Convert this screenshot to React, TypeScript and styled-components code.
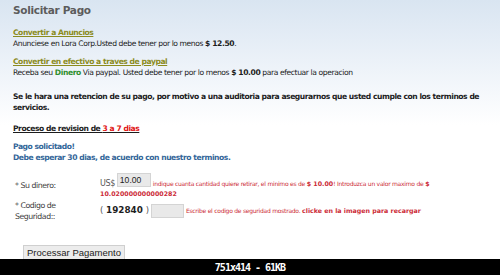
import React from "react";
import styled, { createGlobalStyle } from "styled-components";

const GlobalStyle = createGlobalStyle`
  html, body { margin: 0; padding: 0; background: #ffffff; }
  body { width: 500px; height: 275px; overflow: hidden; }
`;

const Frame = styled.div`
  width: 500px;
  height: 275px;
  display: flex;
  flex-direction: column;
  overflow: hidden;
  font-family: "DejaVu Sans", Verdana, sans-serif;
`;

const Content = styled.main`
  flex: 1;
  min-height: 0;
  overflow: hidden;
  padding: 3px 4px 0 13px;
  background: linear-gradient(180deg, #d9e5f1 0px, #e8eff7 50px, #ffffff 125px);
`;

const Title = styled.h1`
  margin: 0;
  font-size: 10.5px;
  line-height: 14px;
  font-weight: bold;
  color: #5c5c5c;
  letter-spacing: -0.3px;
`;

const Block = styled.section<{ $top: number }>`
  margin-top: ${(p) => p.$top}px;
`;

const Line = styled.p<{ $bold?: boolean; $color?: string }>`
  margin: 0;
  font-size: 7.6px;
  line-height: 11px;
  letter-spacing: ${(p) => (p.$bold ? "-0.45px" : "-0.4px")};
  font-weight: ${(p) => (p.$bold ? "bold" : "normal")};
  color: ${(p) => p.$color || "#1c1c1c"};
`;

const OliveLink = styled.a`
  font-weight: bold;
  color: #8c8c1e;
  text-decoration: underline;
  letter-spacing: -0.45px;
`;

const Strong = styled.b<{ $color?: string }>`
  font-weight: bold;
  color: ${(p) => p.$color || "inherit"};
`;

const Underlined = styled.span`
  text-decoration: underline;
`;

const FormGrid = styled.form`
  margin-top: 10px;
  padding-left: 2px;
  display: grid;
  grid-template-columns: 72px 1fr;
  column-gap: 13px;
  row-gap: 1px;
  align-items: center;
`;

const Label = styled.label`
  font-size: 7.8px;
  line-height: 11.5px;
  letter-spacing: -0.45px;
  color: #3c3c3c;
`;

const Field = styled.div`
  font-size: 6px;
  line-height: 10px;
  letter-spacing: -0.25px;
  color: #cc2b37;
`;

const Currency = styled.span`
  font-size: 8px;
  letter-spacing: -0.4px;
  color: #555555;
`;

const TextInput = styled.input<{ $w: number; $align: string }>`
  box-sizing: border-box;
  width: ${(p) => p.$w}px;
  height: 14px;
  margin: 0 2px;
  padding: 0 2px;
  border: 1px solid #d4d4d4;
  background: #e9e9e9;
  font-family: "Liberation Sans", Arial, sans-serif;
  font-size: 8.6px;
  color: #222222;
  vertical-align: ${(p) => p.$align};
  outline: none;
`;

const HintStrong = styled.b`
  font-size: 6.3px;
  letter-spacing: 0px;
`;

const Paren = styled.span`
  font-size: 8.5px;
  color: #555555;
`;

const Captcha = styled.span`
  display: inline-block;
  margin: 0 3px;
  font-size: 8.8px;
  font-weight: bold;
  letter-spacing: 0px;
  color: #1e1e1e;
  cursor: pointer;
`;

const ButtonRow = styled.div`
  margin-top: 22px;
  padding-left: 10px;
`;

const Button = styled.button`
  box-sizing: border-box;
  display: block;
  width: 102px;
  height: 15px;
  padding: 0;
  border: 1px solid #cfcfcf;
  background: #ececec;
  font-family: "Liberation Sans", Arial, sans-serif;
  font-size: 9.5px;
  line-height: 13px;
  color: #222222;
`;

const InfoBar = styled.footer`
  flex: 0 0 16px;
  height: 16px;
  background: #000000;
  display: flex;
  align-items: center;
  justify-content: center;
  font-family: "DejaVu Sans Mono", "Liberation Mono", monospace;
  font-weight: bold;
  font-size: 10px;
  letter-spacing: -1px;
  color: #ffffff;
`;

export default function App() {
  return (
    <>
      <GlobalStyle />
      <Frame>
        <Content>
          <Title>Solicitar Pago</Title>

          <Block $top={9.5}>
            <Line>
              <OliveLink href="#">Convertir a Anuncios</OliveLink>
            </Line>
            <Line>
              Anunciese en Lora Corp.Usted debe tener por lo menos <Strong>$ 12.50</Strong>.
            </Line>
          </Block>

          <Block $top={7}>
            <Line>
              <OliveLink href="#">Convertir en efectivo a traves de paypal</OliveLink>
            </Line>
            <Line>
              Receba seu <Strong $color="#2e8f2e">Dinero</Strong> Via paypal. Usted debe tener por lo menos{" "}
              <Strong>$ 10.00</Strong> para efectuar la operacion
            </Line>
          </Block>

          <Block $top={13}>
            <Line $bold>
              Se le hara una retencion de su pago, por motivo a una auditoria para asegurarnos que usted cumple con los terminos de servicios.
            </Line>
          </Block>

          <Block $top={10}>
            <Line $bold>
              <Underlined>
                Proceso de revision de <Strong $color="#e01414">3 a 7 dias</Strong>
              </Underlined>
            </Line>
          </Block>

          <Block $top={7}>
            <Line $bold $color="#336699">Pago solicitado!</Line>
            <Line $bold $color="#336699">Debe esperar 30 dias, de acuerdo con nuestro terminos.</Line>
          </Block>

          <FormGrid onSubmit={(e) => e.preventDefault()}>
            <Label htmlFor="dinero">* Su dinero:</Label>
            <Field>
              <Currency>US$</Currency>
              <TextInput id="dinero" $w={34} $align="text-bottom" defaultValue="10.00" />
              indique cuanta cantidad quiere retirar, el minimo es de <HintStrong>$ 10.00</HintStrong>! Introduzca un valor maximo de{" "}
              <HintStrong>$</HintStrong> <HintStrong>10.020000000000282</HintStrong>
            </Field>

            <Label htmlFor="codigo">* Codigo de Seguridad::</Label>
            <Field>
              <Paren>(</Paren>
              <Captcha>192840</Captcha>
              <Paren>)</Paren>
              <TextInput id="codigo" $w={33} $align="middle" />
              Escribe el codigo de seguridad mostrado. <HintStrong>clicke en la imagen para recargar</HintStrong>
            </Field>
          </FormGrid>

          <ButtonRow>
            <Button type="button">Processar Pagamento</Button>
          </ButtonRow>
        </Content>
        <InfoBar>751x414 - 61KB</InfoBar>
      </Frame>
    </>
  );
}
